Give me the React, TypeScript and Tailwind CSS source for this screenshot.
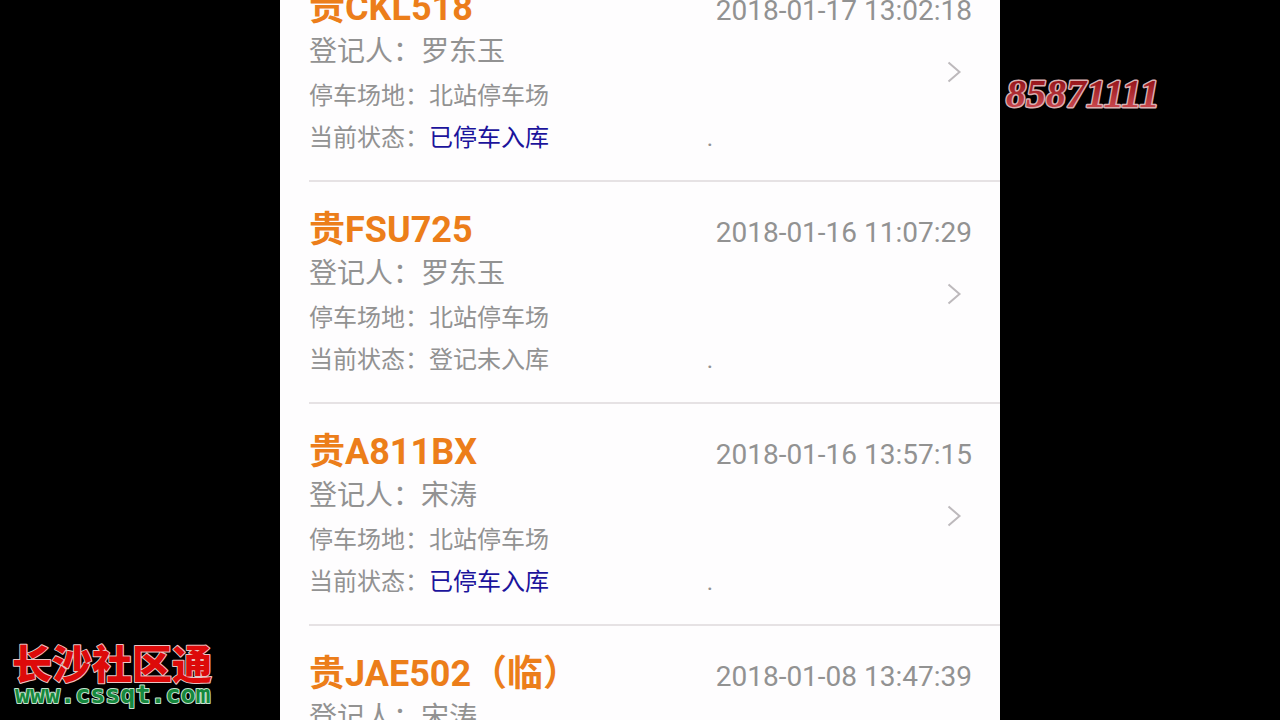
interface ParkingRecord {
  plate: string;
  time: string;
  registrant: string;
  place: string;
  status: string;
  parked?: boolean;
}

const records: ParkingRecord[] = [
  { plate: '贵CKL518', time: '2018-01-17 13:02:18', registrant: '罗东玉', place: '北站停车场', status: '已停车入库', parked: true },
  { plate: '贵FSU725', time: '2018-01-16 11:07:29', registrant: '罗东玉', place: '北站停车场', status: '登记未入库' },
  { plate: '贵A811BX', time: '2018-01-16 13:57:15', registrant: '宋涛', place: '北站停车场', status: '已停车入库', parked: true },
  { plate: '贵JAE502（临）', time: '2018-01-08 13:47:39', registrant: '宋涛', place: '北站停车场', status: '登记未入库' },
];

function Chevron() {
  return (
    <svg className="h-6 w-4 shrink-0" viewBox="0 0 16 24" fill="none" stroke="#bdb9bc" strokeWidth="2" aria-hidden="true">
      <path d="M2.5 2.5 13.5 12 2.5 21.5" />
    </svg>
  );
}

function RecordItem({ record }: { record: ParkingRecord }) {
  return (
    <li className="border-b-2 border-[#e6e2e4]">
      <a href="#" className="grid grid-cols-[1fr_auto] pt-6 pr-7 pb-6">
        <h2 className="text-4xl leading-12 font-bold whitespace-nowrap text-[#ec7e1a]">{record.plate}</h2>
        <time className="self-center pt-1.5 text-[28px] leading-10 whitespace-nowrap">{record.time}</time>
        <div>
          <p className="text-[28px] leading-10">登记人：{record.registrant}</p>
          <p className="text-2xl leading-12">停车场地：{record.place}</p>
        </div>
        <div className="flex items-start justify-end pt-7 pr-2.5">
          <Chevron />
        </div>
        <div className="col-span-2 grid grid-cols-[3fr_2fr] text-2xl leading-9">
          <p>
            当前状态：<span className={record.parked ? 'text-[#1c149c]' : ''}>{record.status}</span>
          </p>
          <span>.</span>
        </div>
      </a>
    </li>
  );
}

function SiteLogo() {
  return (
    <svg className="h-20 w-56" viewBox="0 0 224 80" role="img" aria-label="长沙社区通 www.cssqt.com">
      <g className="[paint-order:stroke]" strokeLinejoin="round">
        <text x="12" y="39" className="font-['Noto_Sans_CJK_SC',sans-serif] text-[40px] font-black" fill="#dd0a0a" stroke="#e8c4c4" strokeWidth="2">
          长沙社区通
        </text>
        <text x="15" y="63" className="font-['DejaVu_Sans_Mono',monospace] text-[25px] font-bold" fill="#15883d" stroke="#c4e2ce" strokeWidth="2">
          www.cssqt.com
        </text>
      </g>
    </svg>
  );
}

function HotlineMark() {
  return (
    <svg className="h-12 w-44" viewBox="0 0 176 48" role="img" aria-label="85871111">
      <defs>
        <linearGradient id="hotline" x1="0" y1="0" x2="0" y2="1">
          <stop offset="0.2" stopColor="#96141a" />
          <stop offset="1" stopColor="#d8565c" />
        </linearGradient>
      </defs>
      <text
        x="6"
        y="37"
        className="font-['Liberation_Serif',serif] text-[40px] font-bold italic [paint-order:stroke]"
        fill="url(#hotline)"
        stroke="#d9b0b2"
        strokeWidth="3"
        strokeLinejoin="round"
      >
        85871111
      </text>
    </svg>
  );
}

export default function App() {
  return (
    <div className="grid h-screen grid-cols-[7fr_18fr_7fr] overflow-hidden bg-black font-[Roboto,'Noto_Sans_CJK_SC',sans-serif]" lang="zh-CN">
      <aside className="flex items-end">
        <SiteLogo />
      </aside>

      <main className="min-w-0 overflow-hidden bg-[#fefdfe] pl-[29px] text-[#929292]">
        {/* list is scrolled part way into the first record */}
        <ul className="-mt-10">
          {records.map((record) => (
            <RecordItem key={record.plate} record={record} />
          ))}
        </ul>
      </main>

      <aside className="pt-[70px]">
        <HotlineMark />
      </aside>
    </div>
  );
}
